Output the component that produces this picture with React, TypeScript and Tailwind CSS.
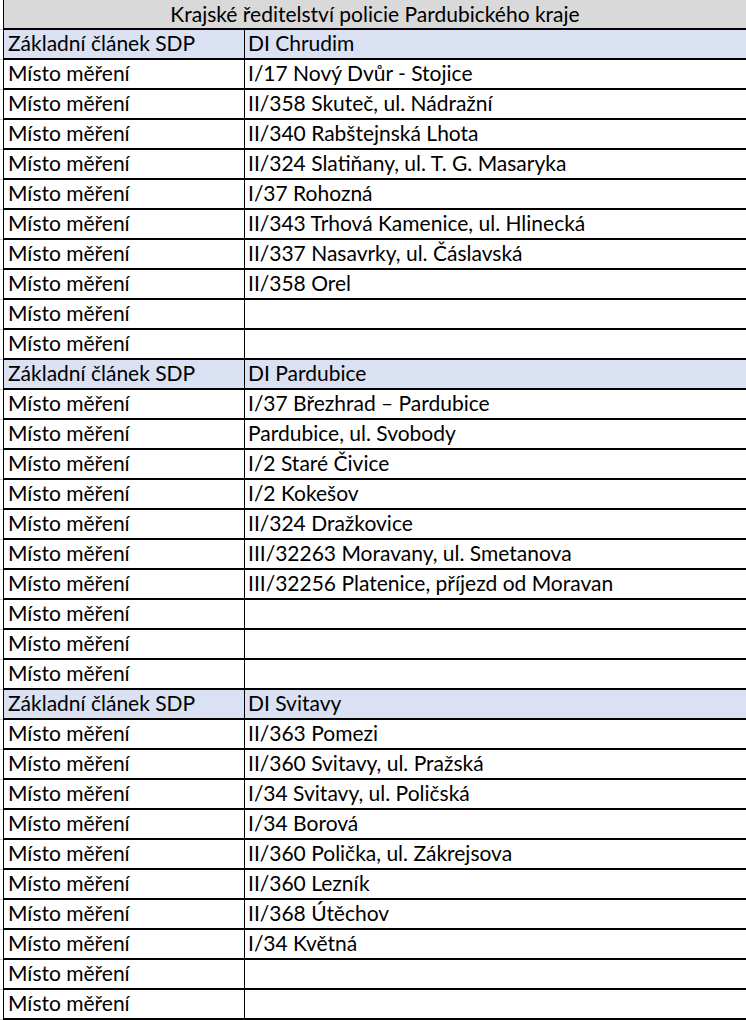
import React from 'react'

type Row = { left: string; right: string; head?: boolean }

const sections: { name: string; places: string[] }[] = [
  {
    name: 'DI Chrudim',
    places: [
      'I/17 Nový Dvůr - Stojice',
      'II/358 Skuteč, ul. Nádražní',
      'II/340 Rabštejnská Lhota',
      'II/324 Slatiňany, ul. T. G. Masaryka',
      'I/37 Rohozná',
      'II/343 Trhová Kamenice, ul. Hlinecká',
      'II/337 Nasavrky, ul. Čáslavská',
      'II/358 Orel',
      '',
      '',
    ],
  },
  {
    name: 'DI Pardubice',
    places: [
      'I/37 Březhrad – Pardubice',
      'Pardubice, ul. Svobody',
      'I/2 Staré Čivice',
      'I/2 Kokešov',
      'II/324 Dražkovice',
      'III/32263 Moravany, ul. Smetanova',
      'III/32256 Platenice, příjezd od Moravan',
      '',
      '',
      '',
    ],
  },
  {
    name: 'DI Svitavy',
    places: [
      'II/363 Pomezi',
      'II/360 Svitavy, ul. Pražská',
      'I/34 Svitavy, ul. Poličská',
      'I/34 Borová',
      'II/360 Polička, ul. Zákrejsova',
      'II/360 Lezník',
      'II/368 Útěchov',
      'I/34 Květná',
      '',
      '',
    ],
  },
]

const rows: Row[] = sections.flatMap((s) => [
  { left: 'Základní článek SDP', right: s.name, head: true },
  ...s.places.map((p) => ({ left: 'Místo měření', right: p })),
])

const TableRow: React.FC<{ row: Row }> = ({ row }) => (
  <div className="flex h-[30px]">
    <div className="w-[3px] shrink-0 border-b border-[#d0d0d0]" />
    <div
      className={`flex flex-1 border-b-2 border-l-[1.5px] border-black ${
        row.head ? 'bg-[#d9e1f2]' : 'bg-white'
      }`}
    >
      <div className="w-[241px] shrink-0 border-r-[1.5px] border-black pl-[4px] leading-[26px] whitespace-nowrap">
        {row.left}
      </div>
      <div className="flex-1 pl-[3px] leading-[26px] whitespace-nowrap">{row.right}</div>
    </div>
  </div>
)

export default function App() {
  return (
    <div className="w-[746px] h-[1020px] overflow-hidden bg-white text-[21px] text-black font-['Lato','Open_Sans',sans-serif]">
      <div className="flex h-[30px]">
        <div className="w-[3px] shrink-0 border-b border-[#d0d0d0]" />
        <div className="flex-1 bg-[#d9d9d9] border-b-2 border-l-[1.5px] border-black text-center leading-[27px] whitespace-nowrap">
          Krajské ředitelství policie Pardubického kraje
        </div>
      </div>
      {rows.map((r, i) => (
        <TableRow key={i} row={r} />
      ))}
    </div>
  )
}
